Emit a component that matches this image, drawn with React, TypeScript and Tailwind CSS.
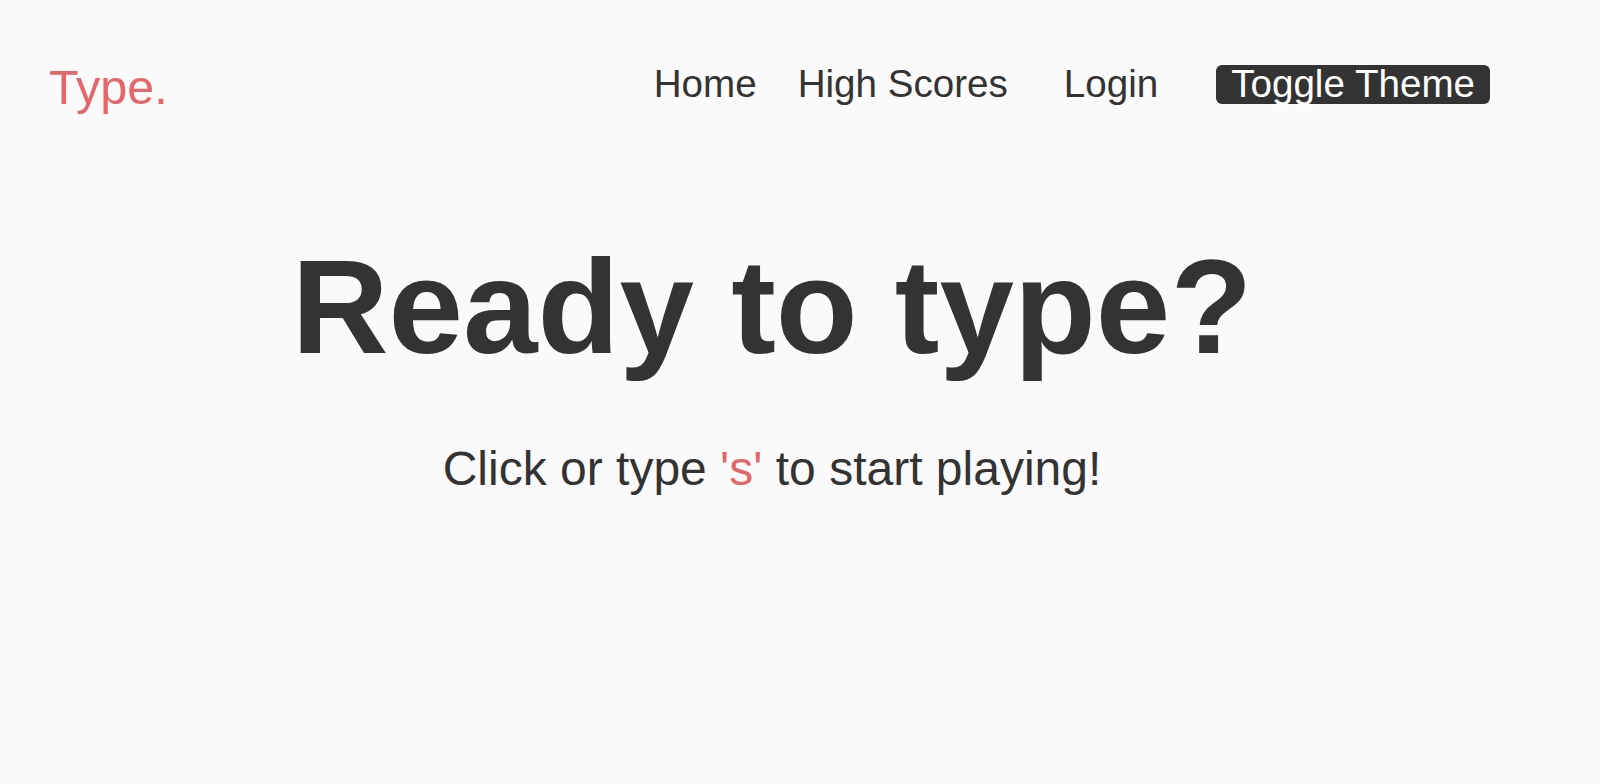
export default function App() {
  return (
    <div
      className="min-h-[784px] w-full bg-[#fafafa] text-[#333333]"
      style={{ fontFamily: '"Liberation Sans", Arial, Helvetica, sans-serif' }}
    >
      <header className="flex items-start justify-between pl-[49px] pr-[110px] pt-[63px]">
        <a href="#" className="text-[48.5px] leading-none text-[#e4666b]">
          Type.
        </a>
        <nav className="mt-[2px] flex items-start text-[38.6px] leading-none">
          <a href="#" className="mr-[41px]">Home</a>
          <a href="#" className="mr-[56px]">High Scores</a>
          <a href="#" className="mr-[58px]">Login</a>
          <button className="h-[39px] rounded-[6px] bg-[#333333] px-[15px] leading-none text-white">
            Toggle Theme
          </button>
        </nav>
      </header>

      <main className="flex flex-col items-center pr-[56px] pt-[128px]">
        <h1 className="text-[134px] font-bold leading-none">Ready to type?</h1>
        <p className="mt-[71px] text-[48px] leading-none">
          Click or type <span className="text-[#e4666b]">'s'</span> to start playing!
        </p>
      </main>
    </div>
  )
}
